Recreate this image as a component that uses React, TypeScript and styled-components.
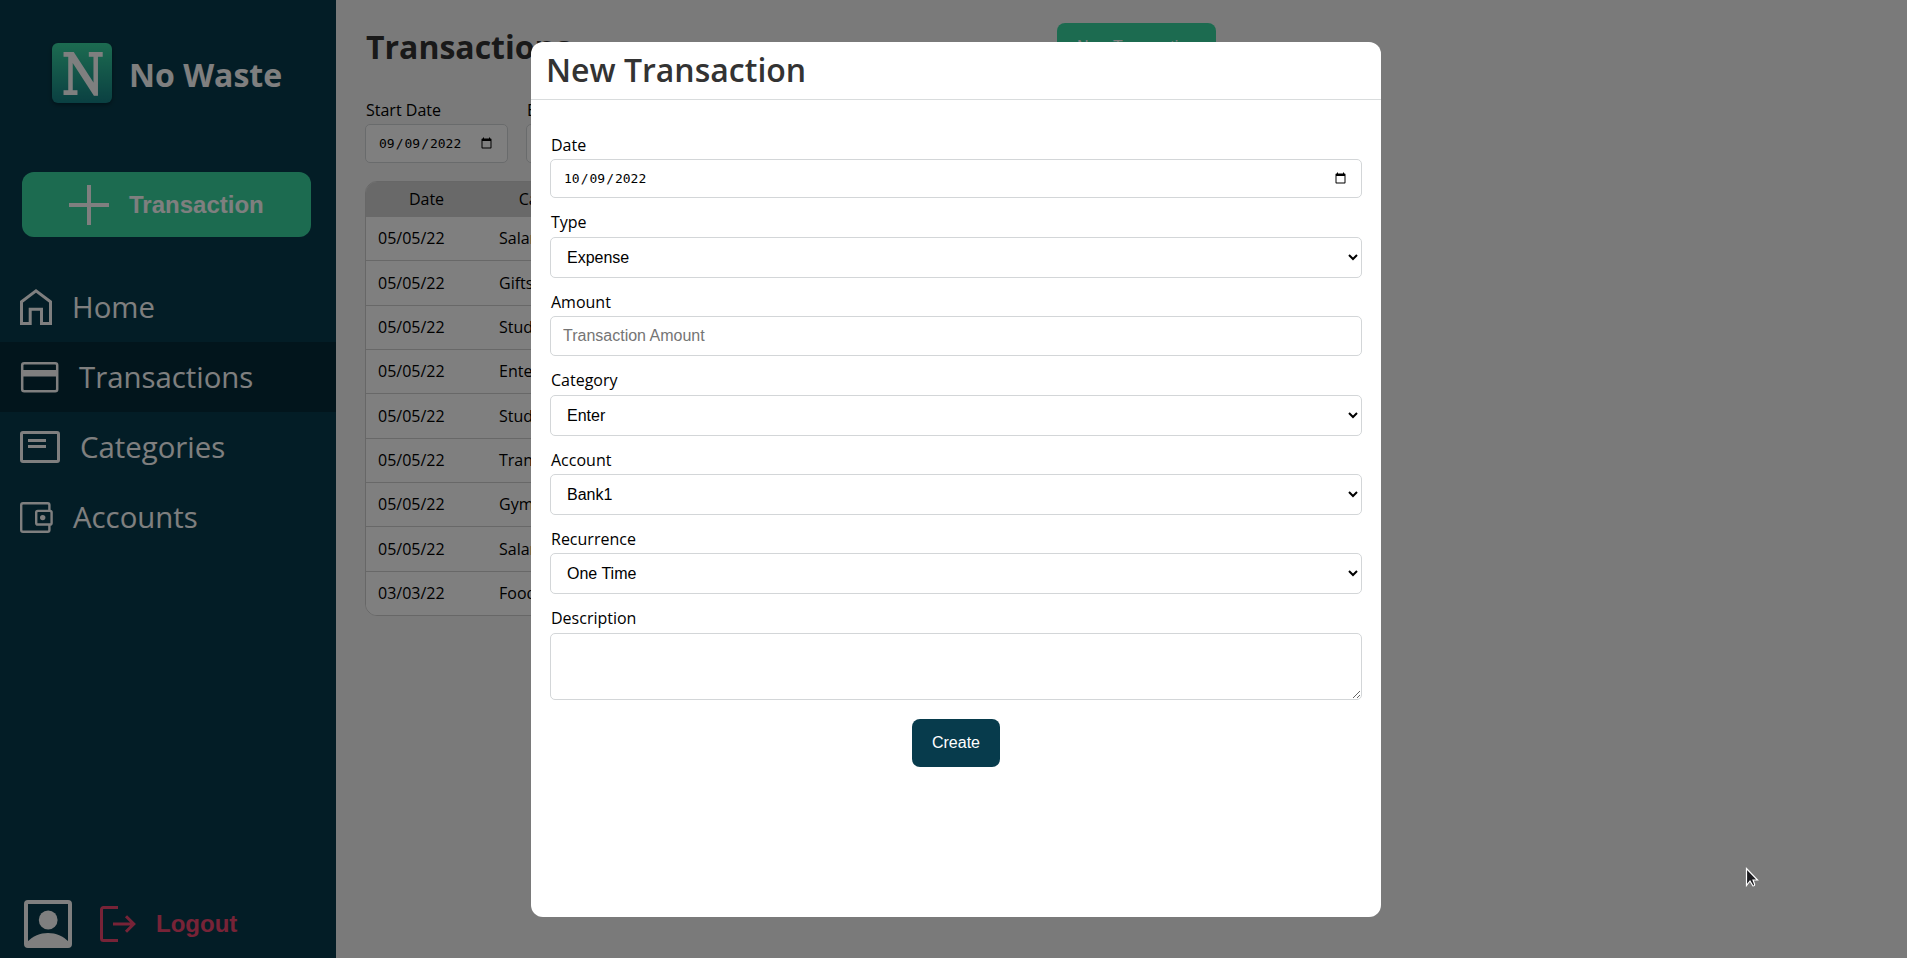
import React from "react";
import styled, { createGlobalStyle, css } from "styled-components";

const GlobalStyle = createGlobalStyle`
  *, *::before, *::after { box-sizing: border-box; }
  body {
    margin: 0;
    overflow: hidden;
    background: #f5f5f5;
    font-family: "Open Sans", "Noto Sans", sans-serif;
    font-size: 16px;
    color: #000;
  }
`;

const Page = styled.div`
  display: flex;
  height: 100vh;
`;

const Sidebar = styled.aside`
  display: flex;
  flex-direction: column;
  width: 336px;
  flex: none;
  background: #073b4c;
  color: #fff;
`;

const Brand = styled.div`
  display: flex;
  align-items: center;
  gap: 17px;
  padding: 43px 0 0 52px;
  font-size: 32px;
  font-weight: 700;
  line-height: 60px;

  svg {
    overflow: visible;
    filter: drop-shadow(0 2px 2px rgba(0, 0, 0, 0.35));
  }
`;

const BrandName = styled.span`
  height: 60px;
  padding-top: 2px;
`;

const AddButton = styled.button`
  display: flex;
  align-items: center;
  gap: 20px;
  width: 289px;
  height: 65px;
  margin: 69px 0 0 22px;
  padding: 0 0 0 47px;
  border: 0;
  border-radius: 12px;
  background: #39d7a1;
  color: #fff;
  font: bold 24px "Liberation Sans", Arial, sans-serif;
`;

const Nav = styled.nav`
  display: flex;
  flex-direction: column;
  margin-top: 35px;
`;

const NavItem = styled.a<{ $active?: boolean }>`
  display: flex;
  align-items: center;
  gap: 20px;
  height: 70px;
  padding-left: 20px;
  background: ${(p) => (p.$active ? "#042b38" : "transparent")};
  font-size: 29.35px;
  line-height: 40px;
`;

const Account = styled.div`
  display: flex;
  align-items: center;
  gap: 28px;
  margin: auto 0 10px 24px;
`;

const LogoutButton = styled.button`
  display: flex;
  align-items: center;
  gap: 19px;
  padding: 0;
  border: 0;
  background: none;
  color: #ef476f;
  font: bold 24px "Liberation Sans", Arial, sans-serif;
`;

const Main = styled.main`
  width: 880px;
  padding: 23px 0 0 29px;
`;

const TopBar = styled.div`
  display: flex;
  justify-content: space-between;
  height: 76px;
`;

const PageTitle = styled.h1`
  margin: 2px 0 0 1px;
  font-size: 32px;
  line-height: 44px;
  color: #333;
`;

const NewButton = styled.button`
  width: 159px;
  height: 48px;
  border: 0;
  border-radius: 8px;
  background: #39d7a1;
  color: #fff;
  font: 16px "Liberation Sans", Arial, sans-serif;
`;

const Filters = styled.div`
  display: flex;
  gap: 18px;
`;

const Label = styled.label`
  display: block;
  padding-left: 1px;
  line-height: 22px;
`;

const control = css`
  display: block;
  width: 100%;
  margin: 0;
  border: 1px solid #d3d6d8;
  border-radius: 5px;
  background: #fff;
  color: #000;
  outline: 0;
`;

const DateInput = styled.input.attrs({ type: "date" })`
  ${control}
  height: 39px;
  padding: 0 12px;
  font-family: "DejaVu Sans Mono", monospace;
  font-size: 13px;
`;

const FilterField = styled.div`
  display: flex;
  flex-direction: column;
  gap: 3px;
  width: 143px;
`;

const Table = styled.div`
  margin-top: 18px;
  border: 1px solid #cfcfcf;
  border-radius: 12px;
  overflow: hidden;
  background: #fff;
`;

const Row = styled.div<{ $head?: boolean }>`
  display: grid;
  grid-template-columns: 121px 130px 1fr 1fr 1fr;
  align-items: center;
  height: ${(p) => (p.$head ? "35px" : "44.35px")};
  padding-bottom: ${(p) => (p.$head ? "1px" : "0.8px")};
  background: ${(p) => (p.$head ? "#d3d3d3" : "#fff")};
  text-align: ${(p) => (p.$head ? "center" : "left")};
  & + & {
    border-bottom: 1px solid #d0d0d0;
  }
  &:last-child {
    height: 43.4px;
    border-bottom: 0;
  }
`;

const Cell = styled.span`
  padding: 0 12px;
`;

const Overlay = styled.div`
  position: fixed;
  inset: 0;
  display: flex;
  align-items: flex-start;
  justify-content: center;
  padding: 42px 0 0 5px;
  background: rgba(0, 0, 0, 0.5);
`;

const Modal = styled.section`
  width: 850px;
  height: 875px;
  border-radius: 12px;
  background: #fff;
`;

const ModalHeader = styled.header`
  height: 58px;
  padding: 6px 0 0 15px;
  border-bottom: 1px solid #d9dcdd;
`;

const ModalTitle = styled.h2`
  margin: 0;
  font-size: 32px;
  font-weight: 600;
  line-height: 44px;
  color: #333;
`;

const Form = styled.form`
  display: flex;
  flex-direction: column;
  gap: 13.05px;
  padding: 34.05px 19px 0;
`;

const Field = styled.div`
  display: flex;
  flex-direction: column;
  gap: 3.35px;
`;

const TextInput = styled.input`
  ${control}
  height: 40px;
  padding: 0 12px;
  font: 16px "Liberation Sans", Arial, sans-serif;
`;

const Select = styled.select`
  ${control}
  height: 41px;
  padding: 0 0 0 12px;
  font: 16px "Liberation Sans", Arial, sans-serif;
`;

const TextArea = styled.textarea`
  ${control}
  height: 67px;
  padding: 12px;
  resize: both;
  font: 16px "Liberation Sans", Arial, sans-serif;
`;

const CreateButton = styled.button`
  align-self: center;
  width: 88px;
  height: 48px;
  margin-top: 6.1px;
  border: 0;
  border-radius: 8px;
  background: #073b4c;
  color: #fff;
  font: 16px "Liberation Sans", Arial, sans-serif;
`;

const Pointer = styled.svg`
  position: absolute;
  left: 1745px;
  top: 867px;
`;

const Logo = () => (
  <svg width="60" height="60" viewBox="0 0 60 60">
    <defs>
      <linearGradient id="logo" x1="0" y1="0" x2="0" y2="1">
        <stop offset="0" stopColor="#39d7a1" />
        <stop offset="1" stopColor="#158084" />
      </linearGradient>
    </defs>
    <rect width="60" height="60" rx="6" fill="url(#logo)" />
    <text
      x="10"
      y="51"
      fontFamily="DejaVu Serif"
      fontWeight="400"
      fontSize="56.5"
      textLength="42"
      lengthAdjust="spacingAndGlyphs"
      fill="#fff"
      stroke="#fff"
      strokeWidth="1.8"
    >
      N
    </text>
  </svg>
);

const PlusIcon = () => (
  <svg width="40" height="40" fill="none" stroke="currentColor" strokeWidth="4">
    <path d="M20 0V40M0 20H40" />
  </svg>
);

const HomeIcon = () => (
  <svg width="32" height="36" fill="none" stroke="currentColor" strokeWidth="3">
    <path d="M1.5 34.5V12.7L16 1.9L30.5 12.7V34.5H21.5V20.2H10.2V34.5Z" />
  </svg>
);

const CardIcon = () => (
  <svg width="39" height="32" fill="none" stroke="currentColor" strokeWidth="2.5">
    <rect x="2.2" y="2.2" width="35" height="28" rx="2" />
    <path d="M2 12.2H37" strokeWidth="6.5" />
  </svg>
);

const CategoryIcon = () => (
  <svg width="40" height="32" fill="none" stroke="currentColor" strokeWidth="3">
    <rect x="1.5" y="1.5" width="37" height="29" rx="1.5" />
    <path d="M8 9.5H26M8 15.5H26" />
  </svg>
);

const WalletIcon = () => (
  <svg width="33" height="31" fill="none" stroke="currentColor" strokeWidth="2.4">
    <path d="M29.4 8V3a1.8 1.8 0 0 0-1.8-1.8H3A1.8 1.8 0 0 0 1.2 3V28A1.8 1.8 0 0 0 3 29.8H27.6a1.8 1.8 0 0 0 1.8-1.8V23" />
    <rect x="16.2" y="8.9" width="15.4" height="13.6" rx="1.6" />
    <circle cx="22.7" cy="15.6" r="2.7" fill="currentColor" stroke="none" />
  </svg>
);

const UserIcon = () => (
  <svg width="48" height="48">
    <rect x="2" y="2" width="44" height="44" rx="2" fill="none" stroke="currentColor" strokeWidth="4" />
    <circle cx="24.2" cy="20" r="9.4" fill="currentColor" />
    <path d="M3 42C9 36 16 33 24 33S39 36 45 42V46H3Z" fill="currentColor" />
  </svg>
);

const LogoutIcon = () => (
  <svg width="37" height="36" fill="none" stroke="currentColor" strokeWidth="3">
    <path d="M18 1.5H3.5a2 2 0 0 0-2 2V32.5a2 2 0 0 0 2 2H18M13 18H34M26 10.2L33.8 18L26 25.8" />
  </svg>
);

const transactions = [
  ["05/05/22", "Salary"],
  ["05/05/22", "Gifts"],
  ["05/05/22", "Study"],
  ["05/05/22", "Enter"],
  ["05/05/22", "Study"],
  ["05/05/22", "Trans"],
  ["05/05/22", "Gym"],
  ["05/05/22", "Salary"],
  ["03/03/22", "Food"],
];

const SelectField = ({ label, value }: { label: string; value: string }) => (
  <Field>
    <Label>{label}</Label>
    <Select defaultValue={value}>
      <option>{value}</option>
    </Select>
  </Field>
);

export default function App() {
  return (
    <>
      <GlobalStyle />
      <Page>
        <Sidebar>
          <Brand>
            <Logo />
            <BrandName>No Waste</BrandName>
          </Brand>
          <AddButton>
            <PlusIcon />
            Transaction
          </AddButton>
          <Nav>
            <NavItem><HomeIcon /><span>Home</span></NavItem>
            <NavItem $active><CardIcon /><span>Transactions</span></NavItem>
            <NavItem><CategoryIcon /><span>Categories</span></NavItem>
            <NavItem><WalletIcon /><span>Accounts</span></NavItem>
          </Nav>
          <Account>
            <UserIcon />
            <LogoutButton>
              <LogoutIcon />
              Logout
            </LogoutButton>
          </Account>
        </Sidebar>
        <Main>
          <TopBar>
            <PageTitle>Transactions</PageTitle>
            <NewButton>New Transaction</NewButton>
          </TopBar>
          <Filters>
            <FilterField>
              <Label>Start Date</Label>
              <DateInput defaultValue="2022-09-09" />
            </FilterField>
            <FilterField>
              <Label>End Date</Label>
              <DateInput defaultValue="2022-10-09" />
            </FilterField>
          </Filters>
          <Table>
            <Row $head>
              <Cell>Date</Cell>
              <Cell>Category</Cell>
            </Row>
            {transactions.map(([date, category], i) => (
              <Row key={i}>
                <Cell>{date}</Cell>
                <Cell>{category}</Cell>
              </Row>
            ))}
          </Table>
        </Main>
      </Page>
      <Overlay>
        <Modal>
          <ModalHeader>
            <ModalTitle>New Transaction</ModalTitle>
          </ModalHeader>
          <Form>
            <Field>
              <Label>Date</Label>
              <DateInput defaultValue="2022-10-09" />
            </Field>
            <SelectField label="Type" value="Expense" />
            <Field>
              <Label>Amount</Label>
              <TextInput placeholder="Transaction Amount" />
            </Field>
            <SelectField label="Category" value="Enter" />
            <SelectField label="Account" value="Bank1" />
            <SelectField label="Recurrence" value="One Time" />
            <Field>
              <Label>Description</Label>
              <TextArea />
            </Field>
            <CreateButton type="button">Create</CreateButton>
          </Form>
        </Modal>
      </Overlay>
      <Pointer width="16" height="22" viewBox="0 0 16 22">
        <path
          d="M1.5 1.5V18.5L5 14L8 19Q10 19 9.5 17L8 13H12.5Z"
          fill="#1c1c20"
          stroke="#fff"
          strokeWidth="1.2"
        />
      </Pointer>
    </>
  );
}
